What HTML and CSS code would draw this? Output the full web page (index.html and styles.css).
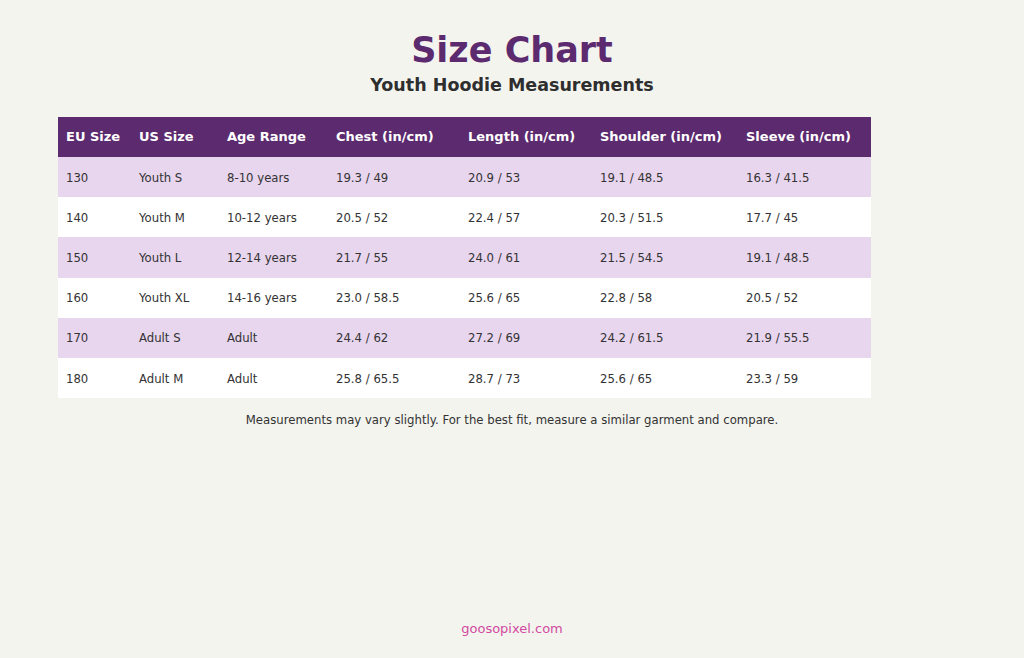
FILE: index.html
```html
<!DOCTYPE html>
<html>
<head>
<meta charset="utf-8">
<link rel="stylesheet" href="styles.css">
</head>
<body>
<div class="page">
  <header class="head">
    <h1 class="title">Size Chart</h1>
    <h2 class="subtitle">Youth Hoodie Measurements</h2>
  </header>
  <table class="chart">
    <thead>
      <tr>
        <th class="c1">EU Size</th>
        <th class="c2">US Size</th>
        <th class="c3">Age Range</th>
        <th class="c4">Chest (in/cm)</th>
        <th class="c5">Length (in/cm)</th>
        <th class="c6">Shoulder (in/cm)</th>
        <th class="c7">Sleeve (in/cm)</th>
      </tr>
    </thead>
    <tbody>
      <tr><td>130</td><td>Youth S</td><td>8-10 years</td><td>19.3 / 49</td><td>20.9 / 53</td><td>19.1 / 48.5</td><td>16.3 / 41.5</td></tr>
      <tr><td>140</td><td>Youth M</td><td>10-12 years</td><td>20.5 / 52</td><td>22.4 / 57</td><td>20.3 / 51.5</td><td>17.7 / 45</td></tr>
      <tr><td>150</td><td>Youth L</td><td>12-14 years</td><td>21.7 / 55</td><td>24.0 / 61</td><td>21.5 / 54.5</td><td>19.1 / 48.5</td></tr>
      <tr><td>160</td><td>Youth XL</td><td>14-16 years</td><td>23.0 / 58.5</td><td>25.6 / 65</td><td>22.8 / 58</td><td>20.5 / 52</td></tr>
      <tr><td>170</td><td>Adult S</td><td>Adult</td><td>24.4 / 62</td><td>27.2 / 69</td><td>24.2 / 61.5</td><td>21.9 / 55.5</td></tr>
      <tr><td>180</td><td>Adult M</td><td>Adult</td><td>25.8 / 65.5</td><td>28.7 / 73</td><td>25.6 / 65</td><td>23.3 / 59</td></tr>
    </tbody>
  </table>
  <p class="note">Measurements may vary slightly. For the best fit, measure a similar garment and compare.</p>
  <div class="spacer"></div>
  <footer class="foot">goosopixel.com</footer>
</div>
</body>
</html>
```
FILE: styles.css
```css
html, body {
  margin: 0;
  padding: 0;
  background: #f4f4ef;
  font-family: "DejaVu Sans", sans-serif;
  color: #333333;
}
.page {
  height: 658px;
  box-sizing: border-box;
  padding: 30px 58px 0 58px;
  display: flex;
  flex-direction: column;
}
.head {
  text-align: center;
}
.title {
  margin: 0;
  font-size: 35px;
  line-height: 41px;
  font-weight: bold;
  color: #5c2a6e;
}
.subtitle {
  margin: 3px 0 0 0;
  font-size: 17.5px;
  line-height: 22px;
  font-weight: bold;
  color: #2e2e2e;
}
.chart {
  margin-top: 21px;
  border-collapse: collapse;
  width: 813px;
  table-layout: fixed;
  background: #ffffff;
}
.chart th, .chart td {
  text-align: left;
  padding: 0 8px;
  box-sizing: border-box;
  white-space: nowrap;
}
.chart th {
  height: 40px;
  background: #5c2a6e;
  color: #ffffff;
  font-size: 13px;
  font-weight: bold;
  padding-bottom: 1px;
}
.chart td {
  height: 40.2px;
  padding-top: 1px;
  font-size: 11.7px;
  color: #333333;
}
.chart tbody tr:nth-child(odd) td {
  background: #e8d5ee;
}
.c1 { width: 73px; }
.c2 { width: 88px; }
.c3 { width: 109px; }
.c4 { width: 132px; }
.c5 { width: 132px; }
.c6 { width: 146px; }
.c7 { width: 133px; }
.note {
  margin: 14px 0 0 0;
  text-align: center;
  font-size: 11.7px;
  line-height: 16px;
  color: #333333;
}
.spacer {
  flex: 1;
}
.foot {
  text-align: center;
  font-size: 13px;
  line-height: 16px;
  color: #d14ba0;
  padding-bottom: 21px;
}
```
